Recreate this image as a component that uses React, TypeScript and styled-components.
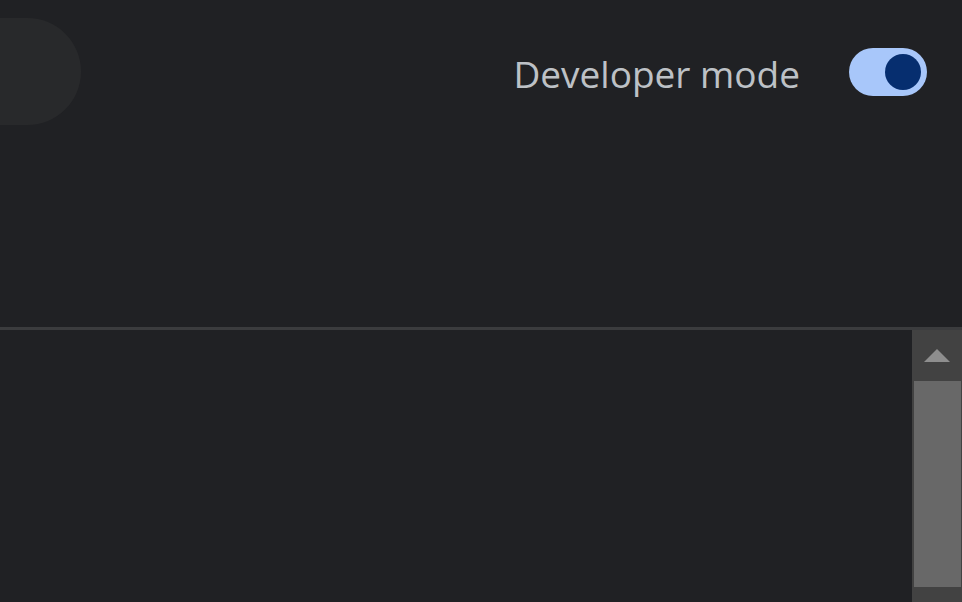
import React from "react";
import styled, { createGlobalStyle } from "styled-components";

const Global = createGlobalStyle`
  html, body { margin: 0; padding: 0; background: #202124; }
  body { font-family: "Open Sans", "Noto Sans", sans-serif; overflow: hidden; }
`;

const Page = styled.div`
  width: 962px;
  height: 602px;
  display: flex;
  flex-direction: column;
  background: #202124;
  overflow: hidden;
`;

const Header = styled.header`
  height: 327px;
  flex: none;
  display: flex;
  align-items: flex-start;
  justify-content: space-between;
  border-bottom: 3px solid #3b3c3e;
`;

const SearchPill = styled.div`
  margin-top: 18px;
  margin-left: -80px;
  width: 161px;
  height: 107px;
  border-radius: 54px;
  background: #28292b;
`;

const ModeControl = styled.label`
  margin-top: 48px;
  margin-right: 35px;
  display: flex;
  align-items: flex-start;
  gap: 49px;
`;

const ModeText = styled.span`
  font-size: 37px;
  line-height: 48px;
  padding-top: 2px;
  color: #bdc1c6;
`;

const Track = styled.span<{ $on: boolean }>`
  width: 78px;
  height: 48px;
  border-radius: 24px;
  background: ${(p) => (p.$on ? "#a8c7fa" : "#5f6368")};
  display: flex;
  align-items: center;
  justify-content: ${(p) => (p.$on ? "flex-end" : "flex-start")};
  padding: 0 6px;
  box-sizing: border-box;
`;

const Knob = styled.span`
  width: 36px;
  height: 36px;
  border-radius: 50%;
  background: #062e6f;
`;

const Body = styled.main`
  flex: 1;
  display: flex;
`;

const Content = styled.div`
  flex: 1;
`;

const Scrollbar = styled.div`
  width: 50px;
  display: flex;
  flex-direction: column;
  background: #424242;
`;

const ArrowButton = styled.div`
  height: 51px;
  flex: none;
  display: flex;
  align-items: center;
  justify-content: center;
`;

const Thumb = styled.div`
  height: 206px;
  margin: 0 1px 0 2px;
  background: #686868;
`;

export default function App() {
  return (
    <Page>
      <Global />
      <Header>
        <SearchPill />
        <ModeControl>
          <ModeText>Developer mode</ModeText>
          <Track $on>
            <Knob />
          </Track>
        </ModeControl>
      </Header>
      <Body>
        <Content />
        <Scrollbar>
          <ArrowButton>
            <svg width="26" height="14" viewBox="0 0 26 14">
              <polygon points="13,0 26,13 0,13" fill="#8e8e8e" />
            </svg>
          </ArrowButton>
          <Thumb />
        </Scrollbar>
      </Body>
    </Page>
  );
}
